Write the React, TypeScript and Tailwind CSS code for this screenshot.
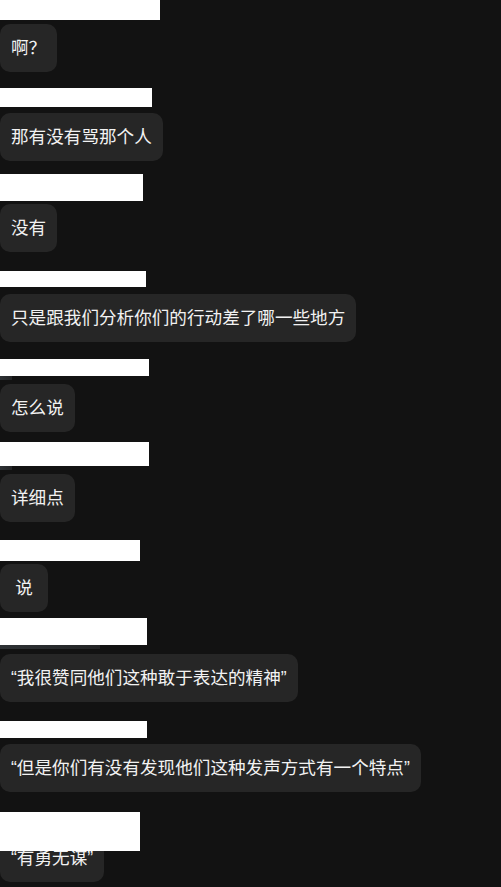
import React from 'react';

interface Msg {
  box: string;
  gap: string;
  text: string;
  smudge?: string;
}

const msgs: Msg[] = [
  { box: 'mt-0 h-[20px] w-[160px]', gap: 'mt-[4px]', text: '啊？' },
  { box: 'mt-[16px] h-[19px] w-[152px]', gap: 'mt-[6px]', text: '那有没有骂那个人' },
  { box: 'mt-[13px] h-[27px] w-[143px]', gap: 'mt-[3px]', text: '没有' },
  { box: 'mt-[19px] h-[16px] w-[146px]', gap: 'mt-[7px]', text: '只是跟我们分析你们的行动差了哪一些地方' },
  { box: 'mt-[17px] h-[17px] w-[149px]', gap: 'mt-[8px]', text: '怎么说', smudge: 'w-[12px]' },
  { box: 'mt-[10px] h-[24px] w-[149px]', gap: 'mt-[8px]', text: '详细点', smudge: 'w-[12px]' },
  { box: 'mt-[18px] h-[21px] w-[140px]', gap: 'mt-[3px]', text: '说' },
  { box: 'mt-[6px] h-[27px] w-[147px]', gap: 'mt-[9px]', text: '“我很赞同他们这种敢于表达的精神”', smudge: 'w-[100px]' },
  { box: 'mt-[19px] h-[17px] w-[147px]', gap: 'mt-[6px]', text: '“但是你们有没有发现他们这种发声方式有一个特点”' },
];

const Bubble: React.FC<{ text: string; className?: string }> = ({ text, className }) => (
  <div
    className={`self-start min-w-[48px] text-center rounded-[10px] bg-[#262626] px-[11px] py-[11px] text-[17.6px] leading-[26px] text-[#f2f2f2] whitespace-nowrap ${className ?? ''}`}
  >
    {text}
  </div>
);

export default function App() {
  return (
    <div
      className="min-h-[887px] w-full bg-[#121212] overflow-hidden flex flex-col"
      style={{ fontFamily: '"Liberation Sans", "Noto Sans CJK SC", sans-serif' }}
    >
      {msgs.map((m, i) => (
        <div key={i} className="flex flex-col">
          <div className={`bg-white ${m.box}`} />
          {m.smudge && (
            <div className={`h-[4px] -mb-[4px] bg-gradient-to-r from-[#3a3f44] to-[#2a2c2e] opacity-70 ${m.smudge}`} />
          )}
          <Bubble text={m.text} className={m.gap} />
        </div>
      ))}
      <div className="relative mt-[42px] flex flex-col">
        <Bubble text="“有勇无谋”" />
        <div className="absolute left-0 -top-[22px] h-[39px] w-[140px] bg-white" />
      </div>
    </div>
  );
}
